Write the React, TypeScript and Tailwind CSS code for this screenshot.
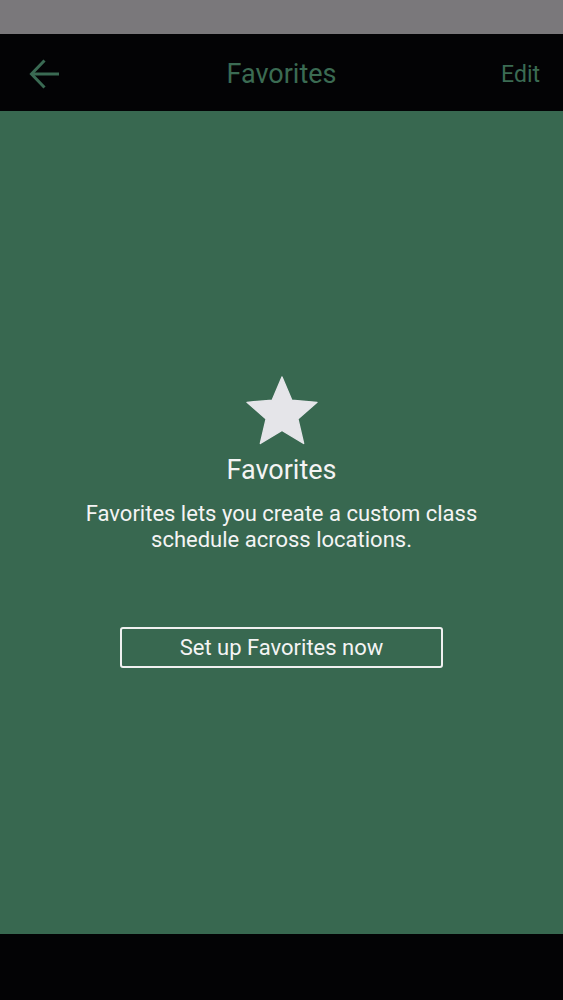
export default function App() {
  return (
    <div
      className="w-[563px] h-[1000px] flex flex-col bg-black overflow-hidden"
      style={{ fontFamily: "Roboto, 'Noto Sans', sans-serif" }}
    >
      {/* status bar */}
      <div className="h-[34px] bg-[#7a787b]" />

      {/* header */}
      <div className="h-[77px] bg-[#030305] grid grid-cols-[1fr_auto_1fr] items-center pt-[3px]">
        <div className="pl-[29px] flex items-center">
          <svg width="30" height="30" viewBox="0 0 30 30" fill="none" stroke="#3a6a53" strokeWidth="3">
            <path d="M3 15H30" />
            <path d="M15.5 1.5 2.5 15l13 13.5" />
          </svg>
        </div>
        <div className="text-[27px] text-[#3b6b53] leading-none">Favorites</div>
        <div className="pr-[23px] flex justify-end">
          <span className="text-[23px] text-[#3b6b53] leading-none">Edit</span>
        </div>
      </div>

      {/* content */}
      <div className="h-[823px] bg-[#386850] flex flex-col items-center pt-[259px]">
        <svg width="84" height="84" viewBox="0 0 24 24">
          <path
            d="M12 17.27L18.18 21l-1.64-7.03L22 9.24l-7.19-.61L12 2 9.19 8.63 2 9.24l5.46 4.73L5.82 21z"
            fill="#e5e5e9"
            stroke="#e5e5e9"
            strokeWidth="0.4"
            strokeLinejoin="round"
          />
        </svg>
        <div className="text-[27px] leading-[32px] text-[#f4f4f4]">Favorites</div>
        <div className="mt-[15px] text-[22px] leading-[26px] text-[#f4f4f4] text-center">
          Favorites lets you create a custom class
          <br />
          schedule across locations.
        </div>
        <button className="mt-[74px] w-[323px] h-[41px] border-2 border-[#f0f0f0] rounded-[3px] text-[22px] text-[#f4f4f4] flex items-center justify-center">
          Set up Favorites now
        </button>
      </div>

      {/* nav bar */}
      <div className="flex-1 bg-[#030305]" />
    </div>
  );
}
